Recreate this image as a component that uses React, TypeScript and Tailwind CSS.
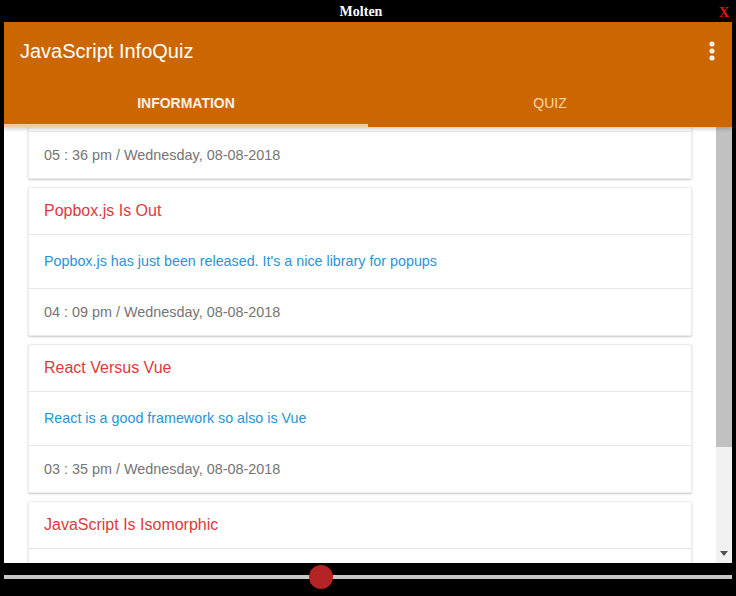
import { EllipsisVertical } from "lucide-react";

interface Post {
  title: string;
  body?: string;
  time?: string;
}

const posts: Post[] = [
  {
    title: "Popbox.js Is Out",
    body: "Popbox.js has just been released. It's a nice library for popups",
    time: "04 : 09 pm / Wednesday, 08-08-2018",
  },
  {
    title: "React Versus Vue",
    body: "React is a good framework so also is Vue",
    time: "03 : 35 pm / Wednesday, 08-08-2018",
  },
  // only the title of this one is in view
  { title: "JavaScript Is Isomorphic" },
];

function Card({ title, body, time }: Post) {
  return (
    <div className="shrink-0 rounded-[2px] border border-[#ececec] bg-white shadow-[0_1px_2px_rgba(0,0,0,0.22)]">
      <div className="flex h-[46px] items-center px-[15px] text-[16px] text-[#e0383e]">
        {title}
      </div>
      <div className="flex h-[54px] items-center border-t border-[#e6e6e6] px-[15px] text-[14.3px] text-[#2a93d5]">
        {body}
      </div>
      <div className="flex h-[47px] items-center border-t border-[#e6e6e6] px-[15px] pt-[1px] text-[14.4px] text-[#757575]">
        {time}
      </div>
    </div>
  );
}

export default function App() {
  return (
    <div className="flex h-[596px] w-[736px] flex-col overflow-hidden bg-black font-['Liberation_Sans',Arial,sans-serif]">
      {/* window title bar */}
      <div className="relative flex h-[22px] shrink-0 items-center justify-center font-['Liberation_Serif',serif] text-[14px] font-bold">
        <span className="-ml-[14px] text-white">Molten</span>
        <span className="absolute right-[7px] top-[2px] text-[#ee1111]">X</span>
      </div>

      <div className="mx-[4px] flex h-[541px] shrink-0 flex-col bg-white">
        {/* app bar */}
        <div className="relative z-10 shrink-0 bg-[#cc6600] shadow-[0_2px_4px_rgba(0,0,0,0.2)]">
          <div className="flex h-[57px] items-center justify-between pl-4 pr-[8px] pt-[1px]">
            <h1 className="text-[20px] text-white">JavaScript InfoQuiz</h1>
            <EllipsisVertical size={24} strokeWidth={3} className="text-white" />
          </div>
          <div className="flex h-[48px]">
            <div className="flex flex-1 flex-col">
              <div className="flex flex-1 items-center justify-center pt-[3px] text-[14px] font-bold text-[#f8f1e8]">
                INFORMATION
              </div>
              <div className="h-[3px] bg-[#f2c9a0]" />
            </div>
            <div className="flex flex-1 flex-col">
              <div className="flex flex-1 items-center justify-center pt-[3px] text-[14px] text-[#ffd6a6]">
                QUIZ
              </div>
              <div className="h-[3px]" />
            </div>
          </div>
        </div>

        {/* content */}
        <div className="flex min-h-0 flex-1">
          <div className="flex min-w-0 flex-1 flex-col gap-2 overflow-hidden px-6">
            {/* tail of the card scrolled out of view */}
            <div className="shrink-0 rounded-b-[2px] border-x border-b border-[#ececec] bg-white shadow-[0_1px_2px_rgba(0,0,0,0.22)]">
              <div className="h-[4px]" />
              <div className="flex h-[47px] items-center border-t border-[#e6e6e6] px-[15px] pt-[1px] text-[14.4px] text-[#757575]">
                05 : 36 pm / Wednesday, 08-08-2018
              </div>
            </div>
            {posts.map((p) => (
              <Card key={p.title} {...p} />
            ))}
          </div>

          {/* scrollbar */}
          <div className="flex w-[16px] shrink-0 flex-col bg-[#f1f1f1]">
            <div className="h-[320px] bg-[#c1c1c1]" />
            <div className="flex-1" />
            <div className="flex h-[16px] items-center justify-center pb-[4px]">
              <div className="h-0 w-0 border-x-[4px] border-t-[5px] border-x-transparent border-t-[#505050]" />
            </div>
          </div>
        </div>
      </div>

      {/* slider */}
      <div className="relative mx-[4px] h-[33px] shrink-0">
        <div className="mt-[12px] h-[4px] bg-[#c8c8c8]" />
        <div className="absolute left-[305px] top-[2px] h-[24px] w-[24px] rounded-full bg-[#b52424]" />
      </div>
    </div>
  );
}
